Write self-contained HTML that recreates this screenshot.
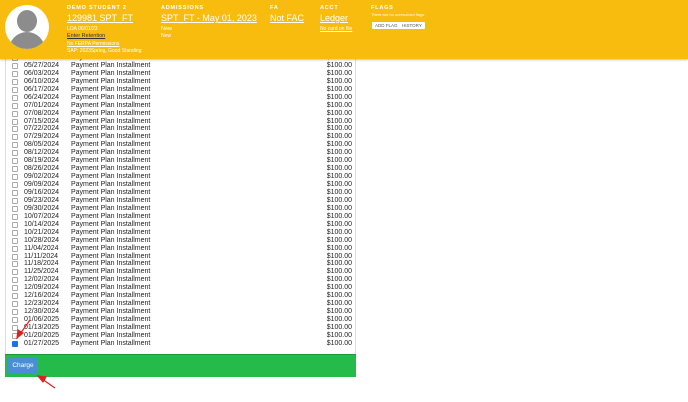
<!DOCTYPE html>
<html><head><style>
body{margin:0;width:688px;height:402px;background:#fff;font-family:"Liberation Sans",sans-serif;position:relative;overflow:hidden}
.hdr{position:absolute;left:0;top:0;width:688px;height:59px;background:#f8bc0e;z-index:2;box-shadow:0 1px 2px rgba(0,0,0,.25);color:#fff}
.av{position:absolute;left:5px;top:5px;width:44px;height:44px;border-radius:50%;background:#fff;overflow:hidden}
.av .h{position:absolute;left:12px;top:5px;width:20px;height:22px;border-radius:50%;background:#8c8c8c}
.av .b{position:absolute;left:4px;top:27px;width:36px;height:26px;border-radius:18px 18px 0 0;background:#8c8c8c}
.t{position:absolute;font-size:5.5px;font-weight:bold;letter-spacing:.8px}
.big{position:absolute;font-size:9px;text-decoration:underline}
.sm{position:absolute;font-size:5px}
.u{text-decoration:underline}
.btn{position:absolute;top:22px;height:7px;background:#fff;color:#555;font-size:4.5px;line-height:7px;padding:0 3px;border-radius:1px}
.box{position:absolute;left:5px;top:50px;width:349px;height:305px;border:1px solid #ddd;background:#fff}
.row{position:absolute;left:0;height:8px;font-size:7px;line-height:8px;color:#222;width:350px}
.cb{position:absolute;left:6px;top:1px;width:4px;height:4px;border:1px solid #aaa;border-radius:1px;background:#fff}
.d{position:absolute;left:18px}.ds{position:absolute;left:65px}.a{position:absolute;right:4px}
.green{position:absolute;left:5px;top:354px;width:351px;height:22px;background:#25bb4b;border-top:1px solid #1a9a3a}
.charge{position:absolute;left:8px;top:358px;width:30px;height:15px;background:#4a8fd5;border-radius:2px;color:#fff;font-size:6.5px;line-height:15px;text-align:center}
</style></head><body>
<div class="hdr">
<div class="av"><div class="h"></div><div class="b"></div></div>
<div class="t" style="left:67px;top:5px">DEMO STUDENT 2</div>
<div class="big" style="left:67px;top:13px">129981 SPT_FT</div>
<div class="sm" style="left:67px;top:26px">LOA 06/01/23</div>
<div class="sm u" style="left:67px;top:33px;color:#333;font-size:5.5px">Enter Retention</div>
<div class="sm u" style="left:67px;top:41px">No FERPA Permissions</div>
<div class="sm" style="left:67px;top:48px">SAP: 2023Spring, Good Standing</div>
<div class="t" style="left:161px;top:5px">ADMISSIONS</div>
<div class="big" style="left:161px;top:13px">SPT_FT - May 01, 2023</div>
<div class="sm" style="left:161px;top:26px;font-size:5.5px">New</div>
<div class="sm" style="left:161px;top:33px">New</div>
<div class="t" style="left:270px;top:5px">FA</div>
<div class="big" style="left:270px;top:13px">Not FAC</div>
<div class="t" style="left:320px;top:5px">ACCT</div>
<div class="big" style="left:320px;top:13px">Ledger</div>
<div class="sm u" style="left:320px;top:26px">No card on file</div>
<div class="t" style="left:371px;top:5px">FLAGS</div>
<div class="sm" style="left:371px;top:12px;font-size:4px">There are no unresolved flags.</div>
<div class="btn" style="left:372px">ADD FLAG</div>
<div class="btn" style="left:399px">HISTORY</div>
</div>
<div class="box">
<div id="rows"></div>
</div>
<div class="green"></div>
<div class="charge">Charge</div>
<svg style="position:absolute;left:0;top:0" width="688" height="402">
<g stroke="#e02020" stroke-width="1.2" fill="#e02020">
<line x1="30" y1="320" x2="20" y2="334"/><polygon points="17,338 18,330 23,333"/>
<line x1="55" y1="388" x2="42" y2="379"/><polygon points="38,376 46,377 43,382"/>
</g></svg>
<script>
var dates=["05/20/2024","05/27/2024","06/03/2024","06/10/2024","06/17/2024","06/24/2024","07/01/2024","07/08/2024","07/15/2024","07/22/2024","07/29/2024","08/05/2024","08/12/2024","08/19/2024","08/26/2024","09/02/2024","09/09/2024","09/16/2024","09/23/2024","09/30/2024","10/07/2024","10/14/2024","10/21/2024","10/28/2024","11/04/2024","11/11/2024","11/18/2024","11/25/2024","12/02/2024","12/09/2024","12/16/2024","12/23/2024","12/30/2024","01/06/2025","01/13/2025","01/20/2025","01/27/2025"];
var h="";
for(var i=0;i<dates.length;i++){
var last=i==dates.length-1;
h+='<div class="row" style="top:'+(3+i*7.94)+'px"><div class="cb"'+(last?' style="background:#1a73e8;border-color:#1a73e8"':'')+'></div><span class="d">'+dates[i]+'</span><span class="ds">Payment Plan Installment</span><span class="a">$100.00</span></div>';}
document.getElementById('rows').innerHTML=h;
</script>
</body></html>
